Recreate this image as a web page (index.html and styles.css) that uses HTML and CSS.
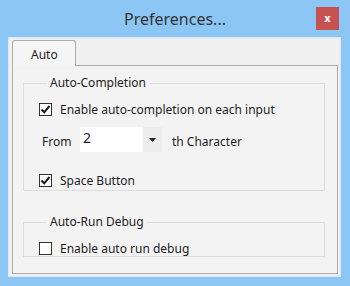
FILE: index.html
```html
<!DOCTYPE html>
<html lang="en">
<head>
    <meta charset="UTF-8">
    <meta name="viewport" content="width=device-width, initial-scale=1.0">
    <title>Preferences...</title>
    <link rel="stylesheet" href="styles.css">
</head>
<body>
    <div class="window">
        <div class="titlebar">
            <span></span>
            <h1 class="title">Preferences...</h1>
            <button class="close" type="button">x</button>
        </div>

        <div class="client">
            <div class="tabs">
                <div class="tab">Auto</div>
            </div>
            <div class="panel">
                <fieldset class="group group-completion">
                    <legend>Auto-Completion</legend>
                    <label class="check row-first">
                        <span class="box"><svg width="11" height="11" viewBox="0 0 11 11"><path d="M1.5 5.5 L4.2 8.3 L9.5 2" fill="none" stroke="#1a1a1a" stroke-width="2"/></svg></span>
                        Enable auto-completion on each input
                    </label>
                    <div class="from-row">
                        <span class="from">From</span>
                        <div class="combo">
                            <span class="combo-value">2</span>
                            <span class="combo-arrow"><svg width="7" height="4" viewBox="0 0 7 4"><path d="M0 0 H7 L3.5 4 Z" fill="#222"/></svg></span>
                        </div>
                        <span class="suffix">th Character</span>
                    </div>
                    <label class="check row-space">
                        <span class="box"><svg width="11" height="11" viewBox="0 0 11 11"><path d="M1.5 5.5 L4.2 8.3 L9.5 2" fill="none" stroke="#1a1a1a" stroke-width="2"/></svg></span>
                        Space Button
                    </label>
                </fieldset>

                <fieldset class="group group-debug">
                    <legend>Auto-Run Debug</legend>
                    <label class="check row-debug">
                        <span class="box"></span>
                        Enable auto run debug
                    </label>
                </fieldset>
            </div>
        </div>
    </div>
</body>
</html>
```

FILE: styles.css
```css
html, body {
    margin: 0;
    padding: 0;
}
body {
    width: 350px;
    height: 286px;
    background-color: #8cc6f4;
    font-family: "Noto Sans", "Open Sans", sans-serif;
    font-size: 12px;
    color: #1e1e1e;
    overflow: hidden;
}
.window {
    display: flex;
    flex-direction: column;
    height: 286px;
}
.titlebar {
    height: 37px;
    display: grid;
    grid-template-columns: 1fr auto 1fr;
    align-items: start;
}
.title {
    margin: 8px 0 0 0;
    font-size: 16px;
    font-weight: normal;
    color: #333;
    line-height: 22px;
}
.close {
    justify-self: end;
    margin: 7px 11px 0 0;
    width: 23px;
    height: 23px;
    padding: 0;
    border: none;
    background-color: #c75050;
    color: #fff;
    font-family: "DejaVu Sans", sans-serif;
    font-weight: bold;
    font-size: 10px;
    line-height: 20px;
}
.client {
    margin: 0 9px 9px 8px;
    flex: 1;
    background-color: #f0f0f0;
    border: 1px solid #dbe9f6;
    padding: 2px 2px 2px 3px;
    display: flex;
    flex-direction: column;
}
.tabs {
    display: flex;
    height: 26px;
    position: relative;
    z-index: 1;
}
.tab {
    width: 64px;
    height: 26px;
    box-sizing: border-box;
    border: 1px solid #adadad;
    border-bottom: none;
    border-radius: 3px 3px 0 0;
    background-color: #f5f5f5;
    padding: 5px 0 0 18px;
    font-size: 12px;
}
.panel {
    flex: 1;
    border: 1px solid #adadad;
    background-color: #f3f3f3;
    margin-top: -1px;
    padding: 9px 12px 0 10px;
}
.group {
    margin: 0;
    padding: 0 0 0 15px;
    border: 1px solid #dcdcdc;
}
.group legend {
    margin-left: 8px;
    padding: 0 3px;
    line-height: 16px;
}
.group-completion {
    height: 116px;
    box-sizing: border-box;
}
.group-debug {
    margin-top: 23px;
    height: 43px;
    box-sizing: border-box;
}
.check {
    display: flex;
    align-items: center;
    gap: 8px;
    height: 16px;
}
.box {
    width: 13px;
    height: 13px;
    box-sizing: border-box;
    border: 1px solid #333;
    background-color: #fff;
    display: flex;
    align-items: center;
    justify-content: center;
}
.row-first {
    margin-top: 10px;
}
.from-row {
    display: flex;
    align-items: center;
    height: 25px;
    margin-top: 10px;
    margin-left: 3px;
}
.from {
    width: 38px;
    padding-top: 3px;
}
.combo {
    width: 82px;
    height: 25px;
    background-color: #fff;
    display: flex;
}
.combo-value {
    flex: 1;
    padding-left: 3px;
    font-size: 14px;
    line-height: 22px;
}
.combo-arrow {
    width: 19px;
    background-color: #ededed;
    display: flex;
    align-items: center;
    justify-content: center;
}
.suffix {
    margin-left: 10px;
    padding-top: 3px;
}
.row-space {
    margin-top: 20px;
}
.row-debug {
    margin-top: 10px;
}
```
